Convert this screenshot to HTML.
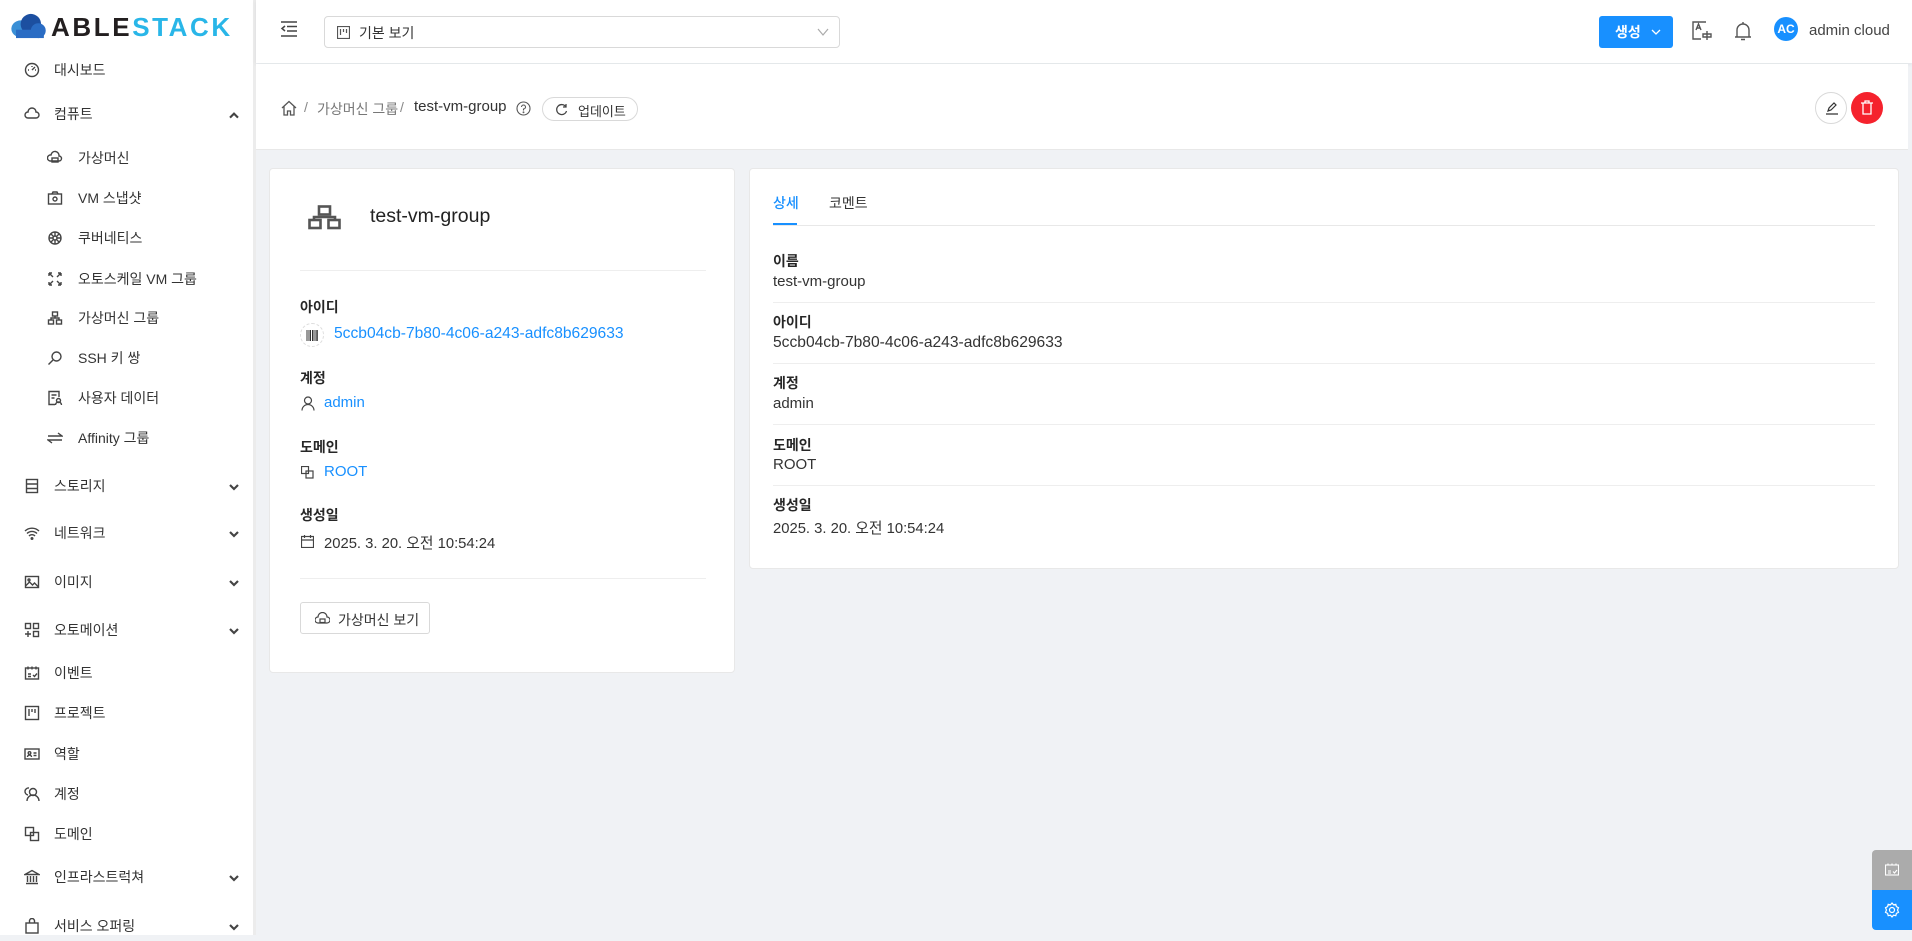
<!DOCTYPE html>
<html><head><meta charset="utf-8">
<style>
*{box-sizing:border-box;margin:0;padding:0}
body{width:1912px;height:935px;overflow:hidden;background:#f0f2f5;font-family:"Liberation Sans","Noto Sans CJK KR",sans-serif;font-size:14px;color:rgba(0,0,0,.85);position:relative}
.a{position:absolute}
.side{left:0;top:0;width:256px;height:935px;background:#fff;border-right:1px solid #e8e8e8}
.si{position:absolute;left:0;width:250px;height:30px;display:flex;align-items:center;color:#333}
.si svg{width:16px;height:16px;fill:none;stroke:#444;stroke-width:1.4}
.si .ic{position:absolute;top:7px}
.si .tx{position:absolute}
.chev{position:absolute;left:226px;top:8px;width:12px;height:12px}
.top{left:256px;top:0;width:1656px;height:63px;background:#fff;box-shadow:0 1px 4px rgba(0,21,41,.08)}
.bc{left:256px;top:64px;width:1652px;height:86px;background:#fff;border-bottom:1px solid #e8e8e8}
.card{background:#fff;border:1px solid #e8e8e8;border-radius:4px}
.lbl{font-weight:bold;color:rgba(0,0,0,.85);font-size:14px}
.link{color:#1890ff}
.v{font-size:15px}
.hr{position:absolute;height:1px;background:#eee}
</style></head><body>
<div class="a side">
  <svg class="a" style="left:10px;top:13px" width="38" height="26" viewBox="0 0 40 28"><ellipse cx="11" cy="17" rx="10" ry="9" fill="#3a8fd6"/><ellipse cx="22" cy="12" rx="11" ry="11" fill="#1c4fa0"/><ellipse cx="30" cy="19" rx="8" ry="8" fill="#2a6cc4"/><rect x="6" y="18" width="30" height="9" fill="#2a6cc4"/></svg>
  <div class="a" style="left:51px;top:13px;font-size:26px;letter-spacing:2.6px;line-height:28px;font-weight:bold"><span style="color:#231f20">ABLE</span><span style="color:#29b6e8">STACK</span></div>

  <div class="si" style="top:55px"><svg class="ic" style="left:24px" viewBox="0 0 16 16"><circle cx="8" cy="8" r="6.5"/><path d="M8 8l3-3M4 8h1M8 4v1M11 8h1"/></svg><span class="tx" style="left:54px">대시보드</span></div>
  <div class="si" style="top:99px"><svg class="ic" style="left:24px" viewBox="0 0 16 16"><path d="M4 12a3 3 0 0 1 0-6 4 4 0 0 1 8 0 3 3 0 0 1 0 6z"/></svg><span class="tx" style="left:54px">컴퓨트</span><svg class="chev" viewBox="0 0 12 12"><path d="M3 8l3-3 3 3" stroke="#444" stroke-width="1.6" fill="none"/></svg></div>
  <div class="si" style="top:143px"><svg class="ic" style="left:47px" viewBox="0 0 16 16"><path d="M3 11a3 3 0 0 1 1-6 4 4 0 0 1 8 1 2.5 2.5 0 0 1 0 5z"/><rect x="5" y="8" width="6" height="4"/></svg><span class="tx" style="left:78px">가상머신</span></div>
  <div class="si" style="top:183px"><svg class="ic" style="left:47px" viewBox="0 0 16 16"><rect x="1.5" y="4" width="13" height="10"/><path d="M5 4l1-2h4l1 2"/><circle cx="8" cy="9" r="2"/></svg><span class="tx" style="left:78px">VM 스냅샷</span></div>
  <div class="si" style="top:223px"><svg class="ic" style="left:47px" viewBox="0 0 16 16"><circle cx="8" cy="8" r="6"/><circle cx="8" cy="8" r="2"/><path d="M8 2v4M8 10v4M2 8h4M10 8h4M4 4l3 3M9 9l3 3M12 4l-3 3M7 9l-3 3"/></svg><span class="tx" style="left:78px">쿠버네티스</span></div>
  <div class="si" style="top:264px"><svg class="ic" style="left:47px" viewBox="0 0 16 16"><path d="M2 2l4 4M2 2h3M2 2v3M14 2l-4 4M14 2h-3M14 2v3M2 14l4-4M2 14h3M2 14v-3M14 14l-4-4M14 14h-3M14 14v-3"/></svg><span class="tx" style="left:78px">오토스케일 VM 그룹</span></div>
  <div class="si" style="top:303px"><svg class="ic" style="left:47px" viewBox="0 0 16 16"><rect x="5.5" y="2" width="5" height="4"/><rect x="1.5" y="10" width="5" height="4"/><rect x="9.5" y="10" width="5" height="4"/><path d="M4 10V8h8v2M8 6v2"/></svg><span class="tx" style="left:78px">가상머신 그룹</span></div>
  <div class="si" style="top:343px"><svg class="ic" style="left:47px" viewBox="0 0 16 16"><circle cx="9.5" cy="6.5" r="4.5"/><path d="M6 10l-4.5 4.5"/></svg><span class="tx" style="left:78px">SSH 키 쌍</span></div>
  <div class="si" style="top:383px"><svg class="ic" style="left:47px" viewBox="0 0 16 16"><path d="M12 7V1.5H2v13h6M4.5 5h5M4.5 8h3"/><circle cx="11.5" cy="10.5" r="2"/><path d="M8.5 15a3 3 0 0 1 6 0"/></svg><span class="tx" style="left:78px">사용자 데이터</span></div>
  <div class="si" style="top:423px"><svg class="ic" style="left:47px" viewBox="0 0 16 16"><path d="M1 6h14l-4-3M15 10H1l4 3"/></svg><span class="tx" style="left:78px">Affinity 그룹</span></div>
  <div class="si" style="top:471px"><svg class="ic" style="left:24px" viewBox="0 0 16 16"><rect x="2.5" y="1.5" width="11" height="13"/><path d="M2.5 6h11M2.5 10.5h11"/></svg><span class="tx" style="left:54px">스토리지</span><svg class="chev" viewBox="0 0 12 12"><path d="M3 4.5l3 3 3-3" stroke="#444" stroke-width="1.6" fill="none"/></svg></div>
  <div class="si" style="top:518px"><svg class="ic" style="left:24px" viewBox="0 0 16 16"><path d="M1 6a10 10 0 0 1 14 0M3 8.5a7 7 0 0 1 10 0M5 11a4 4 0 0 1 6 0"/><circle cx="8" cy="13.5" r=".8"/></svg><span class="tx" style="left:54px">네트워크</span><svg class="chev" viewBox="0 0 12 12"><path d="M3 4.5l3 3 3-3" stroke="#444" stroke-width="1.6" fill="none"/></svg></div>
  <div class="si" style="top:567px"><svg class="ic" style="left:24px" viewBox="0 0 16 16"><rect x="1.5" y="2.5" width="13" height="11"/><path d="M1.5 12l4-4 3 3 2-2 4 4"/><circle cx="5" cy="6" r="1"/></svg><span class="tx" style="left:54px">이미지</span><svg class="chev" viewBox="0 0 12 12"><path d="M3 4.5l3 3 3-3" stroke="#444" stroke-width="1.6" fill="none"/></svg></div>
  <div class="si" style="top:615px"><svg class="ic" style="left:24px" viewBox="0 0 16 16"><rect x="1.5" y="1.5" width="5" height="5"/><rect x="9.5" y="1.5" width="5" height="5"/><rect x="9.5" y="9.5" width="5" height="5"/><path d="M4 9v6M1 12h6"/></svg><span class="tx" style="left:54px">오토메이션</span><svg class="chev" viewBox="0 0 12 12"><path d="M3 4.5l3 3 3-3" stroke="#444" stroke-width="1.6" fill="none"/></svg></div>
  <div class="si" style="top:658px"><svg class="ic" style="left:24px" viewBox="0 0 16 16"><rect x="1.5" y="3" width="13" height="11"/><path d="M4 1.5v3M8 1.5v3M12 1.5v3M4 9h3M4 11.5h3M9 10l1.5 1.5 2.5-3"/></svg><span class="tx" style="left:54px">이벤트</span></div>
  <div class="si" style="top:698px"><svg class="ic" style="left:24px" viewBox="0 0 16 16"><rect x="1.5" y="1.5" width="13" height="13"/><path d="M5 4v7M8 4v3M11 4v4"/></svg><span class="tx" style="left:54px">프로젝트</span></div>
  <div class="si" style="top:739px"><svg class="ic" style="left:24px" viewBox="0 0 16 16"><rect x="1" y="3" width="14" height="10"/><circle cx="5.5" cy="7" r="1.3"/><path d="M3.5 11a2 2 0 0 1 4 0M9.5 7h3M9.5 9.5h3"/></svg><span class="tx" style="left:54px">역할</span></div>
  <div class="si" style="top:779px"><svg class="ic" style="left:24px" viewBox="0 0 16 16"><circle cx="9" cy="6" r="3.5"/><path d="M3 15a6 6 0 0 1 12 0M4 9a3 3 0 0 1 1-7"/></svg><span class="tx" style="left:54px">계정</span></div>
  <div class="si" style="top:819px"><svg class="ic" style="left:24px" viewBox="0 0 16 16"><rect x="1.5" y="1.5" width="8" height="8"/><rect x="6.5" y="6.5" width="8" height="8"/></svg><span class="tx" style="left:54px">도메인</span></div>
  <div class="si" style="top:862px"><svg class="ic" style="left:24px" viewBox="0 0 16 16"><path d="M1 5.5L8 1.5l7 4zM2 14.5h12M3.5 7v6M6.5 7v6M9.5 7v6M12.5 7v6"/></svg><span class="tx" style="left:54px">인프라스트럭쳐</span><svg class="chev" viewBox="0 0 12 12"><path d="M3 4.5l3 3 3-3" stroke="#444" stroke-width="1.6" fill="none"/></svg></div>
  <div class="si" style="top:911px"><svg class="ic" style="left:24px" viewBox="0 0 16 16"><rect x="2" y="5" width="12" height="10"/><path d="M5.5 5V3a2.5 2.5 0 0 1 5 0v2"/></svg><span class="tx" style="left:54px">서비스 오퍼링</span><svg class="chev" viewBox="0 0 12 12"><path d="M3 4.5l3 3 3-3" stroke="#444" stroke-width="1.6" fill="none"/></svg></div>
  <div class="a" style="left:253px;top:0;width:3px;height:935px;background:#ececec"></div>
</div>

<div class="a top">
  <svg class="a" style="left:24px;top:21px" width="18" height="16" viewBox="0 0 18 16" fill="none" stroke="#444" stroke-width="1.5"><path d="M1 1h16M7 5.5h10M7 10h10M1 15h16M5 5l-3 2.5 3 2.5"/></svg>
  <div class="a" style="left:68px;top:16px;width:516px;height:32px;border:1px solid #d9d9d9;border-radius:4px">
    <svg class="a" style="left:12px;top:9px" width="13" height="13" viewBox="0 0 13 13" fill="none" stroke="#555" stroke-width="1.2"><rect x=".5" y=".5" width="12" height="12"/><path d="M3.5 3v6M6.5 3v3M9.5 3v4"/></svg>
    <span class="a" style="left:34px;top:6px;color:#333">기본 보기</span>
    <svg class="a" style="left:492px;top:10px" width="12" height="10" viewBox="0 0 12 10" fill="none" stroke="#aaa" stroke-width="1.2"><path d="M1 2l5 6 5-6"/></svg>
  </div>
  <div class="a" style="left:1343px;top:16px;width:74px;height:32px;background:#1890ff;border-radius:3px;color:#fff;font-weight:bold;font-size:14px">
    <span class="a" style="left:16px;top:6px">생성</span>
    <svg class="a" style="left:52px;top:12px" width="10" height="8" viewBox="0 0 10 8" fill="none" stroke="#fff" stroke-width="1.3"><path d="M1 2l4 4 4-4"/></svg>
  </div>
  <svg class="a" style="left:1436px;top:21px" width="20" height="20" viewBox="0 0 20 20" fill="none" stroke="#555" stroke-width="1.4"><path d="M14 1H1v17h8"/><path d="M4 9l2.5-6L9 9M5 7h3"/><path d="M11 13h8v3h-8zM15 10v9"/></svg>
  <svg class="a" style="left:1479px;top:21px" width="16" height="20" viewBox="0 0 16 20" fill="none" stroke="#555" stroke-width="1.4"><path d="M2 16V9a6 6 0 0 1 12 0v7zM0 16h16M8 1v2M6 18.5h4"/></svg>
  <div class="a" style="left:1518px;top:17px;width:24px;height:24px;border-radius:50%;background:#1890ff;color:#fff;font-size:12px;font-weight:bold;text-align:center;line-height:24px">AC</div>
  <span class="a" style="left:1553px;top:22px;font-size:15px;color:#444">admin cloud</span>
</div>

<div class="a bc">
  <svg class="a" style="left:25px;top:36px" width="16" height="16" viewBox="0 0 16 16" fill="none" stroke="#555" stroke-width="1.3"><path d="M1 8L8 1.5 15 8M3 6.5V15h3.5v-4h3v4H13V6.5"/></svg>
  <span class="a" style="left:48px;top:35px;color:#888">/</span>
  <span class="a" style="left:61px;top:35px;color:#777">가상머신 그룹</span>
  <span class="a" style="left:144px;top:35px;color:#888">/</span>
  <span class="a" style="left:158px;top:34px;color:#333;font-size:15px">test-vm-group</span>
  <svg class="a" style="left:260px;top:37px" width="15" height="15" viewBox="0 0 15 15" fill="none" stroke="#555" stroke-width="1.1"><circle cx="7.5" cy="7.5" r="6.5"/><path d="M5.5 6a2 2 0 1 1 2 2v1.5"/><circle cx="7.5" cy="11.3" r=".4"/></svg>
  <div class="a" style="left:286px;top:33px;width:96px;height:24px;border:1px solid #d9d9d9;border-radius:12px">
    <svg class="a" style="left:12px;top:5px" width="13" height="13" viewBox="0 0 13 13" fill="none" stroke="#444" stroke-width="1.3"><path d="M11 4A5 5 0 1 0 11.5 8M11 1v3H8"/></svg>
    <span class="a" style="left:35px;top:3px;font-size:13px;color:#333">업데이트</span>
  </div>
  <div class="a" style="left:1559px;top:28px;width:32px;height:32px;border:1px solid #d9d9d9;border-radius:50%">
    <svg class="a" style="left:9px;top:8px" width="14" height="14" viewBox="0 0 14 14" fill="none" stroke="#333" stroke-width="1.2"><path d="M3 10l1-3 5-5 2 2-5 5zM1 13h12"/></svg>
  </div>
  <div class="a" style="left:1595px;top:28px;width:32px;height:32px;background:#f5222d;border-radius:50%">
    <svg class="a" style="left:9px;top:8px" width="14" height="15" viewBox="0 0 14 15" fill="none" stroke="#fff" stroke-width="1.3"><path d="M1 3h12M5 3V1h4v2M3 3v11h8V3"/></svg>
  </div>
</div>

<div class="a card" style="left:269px;top:168px;width:466px;height:505px">
  <svg class="a" style="left:38px;top:36px" width="33" height="25" viewBox="0 0 33 25" fill="none" stroke="#555" stroke-width="2.6"><rect x="11" y="1.5" width="11" height="8"/><rect x="1.5" y="15" width="11" height="8"/><rect x="20.5" y="15" width="11" height="8"/><path d="M6 15v-3h21v3"/></svg>
  <span class="a" style="left:100px;top:36px;font-size:19.5px;font-weight:500;color:#222">test-vm-group</span>
  <div class="hr" style="left:30px;top:101px;width:406px"></div>
  <span class="a lbl" style="left:30px;top:128px">아이디</span>
  <div class="a" style="left:30px;top:154px;width:24px;height:24px;border:1px dashed #ddd;border-radius:50%">
    <svg class="a" style="left:5px;top:6px" width="12" height="11" viewBox="0 0 12 11" stroke="#333" stroke-width="1"><path d="M1 0v11M3 0v11M4.5 0v11M6.5 0v11M8 0v11M10 0v11M11.3 0v11"/></svg>
  </div>
  <span class="a link" style="left:64px;top:156px;font-size:15.6px">5ccb04cb-7b80-4c06-a243-adfc8b629633</span>
  <span class="a lbl" style="left:30px;top:199px">계정</span>
  <svg class="a" style="left:31px;top:227px" width="14" height="15" viewBox="0 0 14 15" fill="none" stroke="#444" stroke-width="1.2"><circle cx="7" cy="4.5" r="3.5"/><path d="M1 14.5a6 6 0 0 1 12 0"/></svg>
  <span class="a link v" style="left:54px;top:225px">admin</span>
  <span class="a lbl" style="left:30px;top:268px">도메인</span>
  <svg class="a" style="left:31px;top:297px" width="13" height="13" viewBox="0 0 13 13" fill="none" stroke="#444" stroke-width="1.2"><rect x=".5" y=".5" width="7" height="7"/><rect x="5" y="5" width="7" height="7"/></svg>
  <span class="a link v" style="left:54px;top:294px">ROOT</span>
  <span class="a lbl" style="left:30px;top:336px">생성일</span>
  <svg class="a" style="left:31px;top:366px" width="13" height="13" viewBox="0 0 13 13" fill="none" stroke="#444" stroke-width="1.2"><rect x=".5" y="1.5" width="12" height="11"/><path d="M.5 5h12M3.5 0v3M9.5 0v3"/></svg>
  <span class="a" style="left:54px;top:363px;color:#333;font-size:14.8px">2025. 3. 20. 오전 10:54:24</span>
  <div class="hr" style="left:30px;top:409px;width:406px"></div>
  <div class="a" style="left:30px;top:433px;width:130px;height:32px;border:1px solid #d9d9d9;border-radius:3px">
    <svg class="a" style="left:14px;top:9px" width="15" height="13" viewBox="0 0 15 13" fill="none" stroke="#444" stroke-width="1.2"><path d="M3 11a3 3 0 0 1 0-6 4.5 4.5 0 0 1 9 0 3 3 0 0 1 0 6z"/><rect x="5" y="7" width="5" height="3.5"/></svg>
    <span class="a" style="left:37px;top:7px;color:#333">가상머신 보기</span>
  </div>
</div>

<div class="a card" style="left:749px;top:168px;width:1150px;height:401px"></div>
<span class="a" style="left:773px;top:193px;color:#1890ff;font-weight:500">상세</span>
<span class="a" style="left:829px;top:193px;color:#333">코멘트</span>
<div class="hr" style="left:773px;top:225px;width:1102px;background:#e8e8e8"></div>
<div class="a" style="left:773px;top:223px;width:24px;height:2px;background:#1890ff"></div>

<span class="a lbl" style="left:773px;top:251px">이름</span>
<span class="a v" style="left:773px;top:273px;color:#333">test-vm-group</span>
<div class="hr" style="left:773px;top:302px;width:1102px"></div>
<span class="a lbl" style="left:773px;top:312px">아이디</span>
<span class="a" style="left:773px;top:334px;color:#333;font-size:15.6px">5ccb04cb-7b80-4c06-a243-adfc8b629633</span>
<div class="hr" style="left:773px;top:363px;width:1102px"></div>
<span class="a lbl" style="left:773px;top:373px">계정</span>
<span class="a v" style="left:773px;top:395px;color:#333">admin</span>
<div class="hr" style="left:773px;top:424px;width:1102px"></div>
<span class="a lbl" style="left:773px;top:435px">도메인</span>
<span class="a v" style="left:773px;top:456px;color:#333">ROOT</span>
<div class="hr" style="left:773px;top:485px;width:1102px"></div>
<span class="a lbl" style="left:773px;top:495px">생성일</span>
<span class="a" style="left:773px;top:517px;color:#333;font-size:14.8px">2025. 3. 20. 오전 10:54:24</span>

<div class="a" style="left:1872px;top:850px;width:40px;height:40px;background:#ababab;border-radius:4px 0 0 0">
  <svg class="a" style="left:13px;top:13px" width="14" height="13" viewBox="0 0 14 13" fill="none" stroke="#fff" stroke-width="1.1"><rect x=".5" y="2" width="13" height="10"/><path d="M3 .5v2M7 .5v2M11 .5v2M3 8h3M3 10h3M8 8.5l1.5 1.5 2.5-3"/></svg>
</div>
<div class="a" style="left:1872px;top:890px;width:40px;height:40px;background:#1890ff;border-radius:0 0 0 4px">
  <svg class="a" style="left:12px;top:12px" width="16" height="16" viewBox="0 0 16 16" fill="none" stroke="#fff" stroke-width="1.2"><path d="M8 1l1.5 1.8 2.3-.5.6 2.3 2.1 1.1-1 2.3 1 2.3-2.1 1.1-.6 2.3-2.3-.5L8 15l-1.5-1.8-2.3.5-.6-2.3-2.1-1.1 1-2.3-1-2.3 2.1-1.1.6-2.3 2.3.5z"/><circle cx="8" cy="8" r="2.5"/></svg>
</div>
</body></html>
